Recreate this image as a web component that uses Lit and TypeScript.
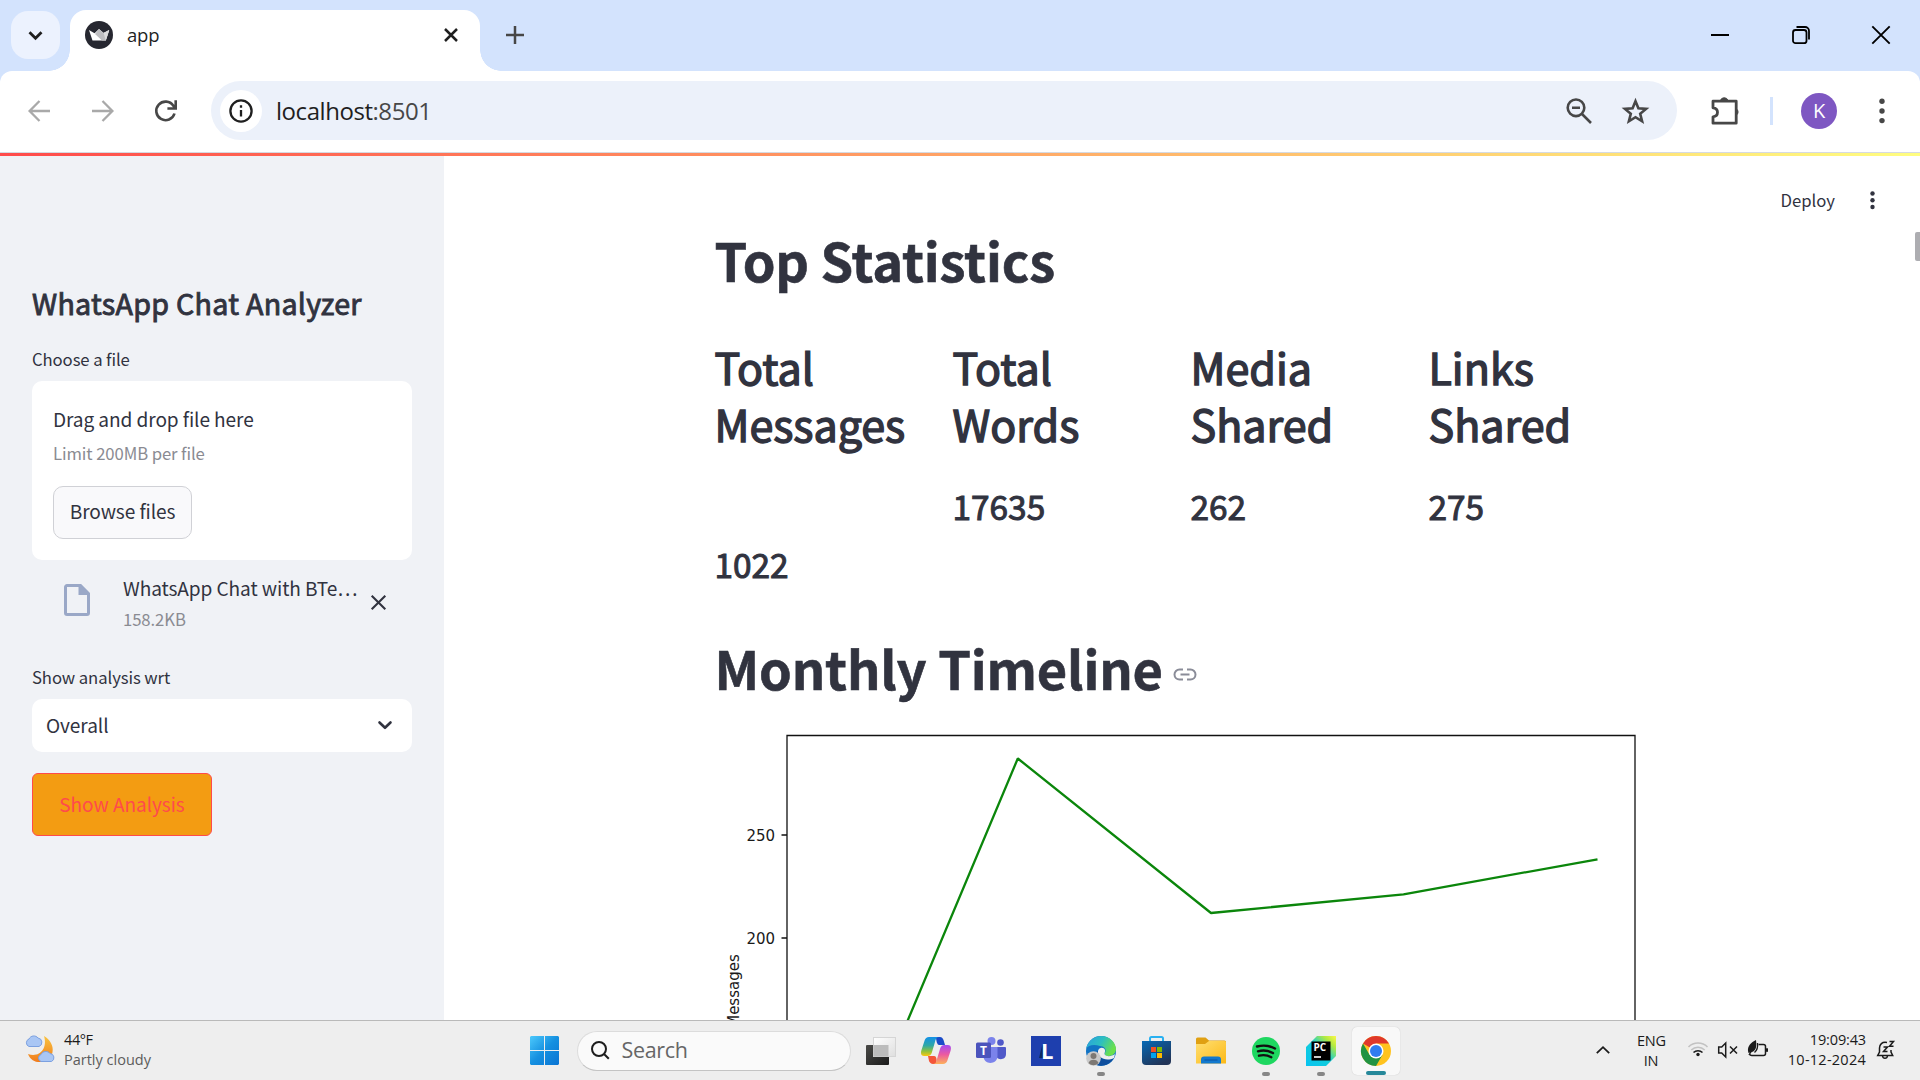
import { LitElement, html, css } from "lit";
import { customElement } from "lit/decorators.js";

const stats = [
  { a: "Total", b: "Messages", value: "1022", late: true },
  { a: "Total", b: "Words", value: "17635", late: false },
  { a: "Media", b: "Shared", value: "262", late: false },
  { a: "Links", b: "Shared", value: "275", late: false },
];

@customElement("browser-chrome")
class BrowserChrome extends LitElement {
  static styles = css`
    :host { display: block; height: 153px; background: #d3e3fd; font-family: "Open Sans", "Noto Sans", sans-serif; color: #1f1f1f; }
    svg { display: block; flex: none; overflow: visible; }
    .tabs { height: 71px; display: flex; align-items: flex-start; box-sizing: border-box; padding: 10px 30px 0 11px; }
    .search { width: 49px; height: 48px; margin-top: 1px; border-radius: 17px; background: #ecf2fe; display: grid; place-items: center; }
    .tab { position: relative; margin-left: 10px; width: 410px; height: 61px; box-sizing: border-box; background: #fff; border-radius: 16px 16px 0 0; display: flex; align-items: center; padding: 0 22.5px 11px 15px; }
    .tab::before, .tab::after { content: ""; position: absolute; bottom: 0; width: 21px; height: 21px; }
    .tab::before { left: -21px; background: radial-gradient(circle at 0 0, transparent 20.5px, #fff 21px); }
    .tab::after { right: -21px; background: radial-gradient(circle at 100% 0, transparent 20.5px, #fff 21px); }
    .name { flex: 1; margin-left: 14px; font-size: 18.5px; line-height: 28px; letter-spacing: -0.2px; }
    .plus { margin: 16px 0 0 25.5px; }
    .grow { flex: 1; }
    .win { display: flex; gap: 62.5px; margin-top: 16px; }
    .bar { height: 82px; box-sizing: border-box; border-bottom: 1px solid #d5dae2; background: #fff; border-radius: 12px 12px 0 0; display: flex; align-items: center; padding: 0 26px 2px 28px; }
    .nav { display: flex; gap: 41.5px; }
    .omni { width: 1466px; height: 59px; margin: 0 34px 0 34px; box-sizing: border-box; border-radius: 30px; background: #ecf1fa; display: flex; align-items: center; padding: 0 28px 0 9px; }
    .info { width: 42px; height: 42px; border-radius: 50%; background: #fff; display: grid; place-items: center; }
    .url { flex: 1; margin-left: 14px; font-size: 24px; line-height: 34px; letter-spacing: -0.45px; }
    .url span { color: #474747; }
    .star { margin-left: 30px; }
    .div { width: 3px; height: 28px; background: #d3e3fd; margin: 0 28px 0 30px; }
    .avatar { width: 36px; height: 36px; border-radius: 50%; background: #7e57c2; color: #fff; font-size: 20px; line-height: 36px; text-align: center; margin-right: 42px; }
  `;
  render() {
    return html`
      <div class="tabs">
        <div class="search"><svg width="15" height="9" viewBox="0 0 15 9"><path d="M1.5 1.3 7.5 7.2 13.5 1.3" fill="none" stroke="#1f1f1f" stroke-width="2.8"/></svg></div>
        <div class="tab">
          <svg width="28" height="28" viewBox="0 0 28 28"><circle cx="14" cy="14" r="14" fill="#262730"/><path d="M4 9l5.5 3.2L14 8l4.6 4.1L24.2 9l-3.4 10.5H7.5z" fill="#fff"/><path d="M14 8l4.6 4.1L24.2 9l-3.4 10.5H17L10 13z" fill="#bdbdc0"/><path d="M18.6 12.1L24.2 9l-3.4 10.5z" fill="#dcdcdd"/></svg>
          <div class="name">app</div>
          <svg width="14" height="14" viewBox="0 0 14 14"><path d="M1 1l12 12M13 1L1 13" stroke="#1f1f1f" stroke-width="2.5"/></svg>
        </div>
        <svg class="plus" width="18" height="18" viewBox="0 0 18 18"><path d="M9 0v18M0 9h18" stroke="#474747" stroke-width="2.5"/></svg>
        <div class="grow"></div>
        <div class="win">
          <svg width="18" height="18"><path d="M0 9h18" stroke="#000" stroke-width="2"/></svg>
          <svg width="18" height="18" fill="none" stroke="#000" stroke-width="1.8"><rect x="1" y="4" width="13.5" height="13.2" rx="2.5"/><path d="M4.5 1h8.500a4 4 0 0 1 4 4v8.500"/></svg>
          <svg width="18" height="18"><path d="M.3.3l17.400 17.400M17.700.3L.3 17.700" stroke="#000" stroke-width="1.900"/></svg>
        </div>
      </div>
      <div class="bar">
        <div class="nav">
          <svg width="22" height="22" fill="none" stroke="#a9a9a9" stroke-width="2.300"><path d="M22 11H2M11.500 1 1.600 11l9.900 10"/></svg>
          <svg width="22" height="22" fill="none" stroke="#a9a9a9" stroke-width="2.300"><path d="M0 11h20M10.500 1l9.900 10-9.900 10"/></svg>
          <svg width="22" height="22" fill="none" stroke="#474747" stroke-width="2.600"><path d="M19.500 13.500A9.300 9.300 0 1 1 18.300 5.700L20.500 8M20.700 .2v8.300h-8.300"/></svg>
        </div>
        <div class="omni">
          <div class="info"><svg width="24" height="24" fill="none" stroke="#1f1f1f" stroke-width="2.300"><circle cx="12" cy="12" r="10.600"/><path d="M12 11v6.500M12 6.300v2.500"/></svg></div>
          <div class="url">localhost<span>:8501</span></div>
          <svg width="26" height="26" fill="none" stroke="#474747" stroke-width="2.600"><circle cx="10" cy="9.800" r="8.300"/><path d="M16 16l9 9M6 9.800h8"/></svg>
          <svg class="star" width="27" height="26" viewBox="0 0 27 26"><path d="M13.500 3.200l2.900 7.100 7.700.6-5.900 4.900 1.900 7.500-6.600-4.100-6.600 4.100 1.900-7.500-5.900-4.900 7.700-.6z" fill="none" stroke="#474747" stroke-width="2.600"/></svg>
        </div>
        <svg width="29" height="29" viewBox="0 0 29 29"><path d="M2 5.200h23.200v22H2v-6.400c6-.6 6-8.400 0-9z" fill="none" stroke="#474747" stroke-width="2.800" stroke-linejoin="round"/><path d="M9.400 4.500a4 4 0 0 1 7.600 0zM25 12.500a4 4 0 0 1 0 7z" fill="#474747" stroke="#474747"/></svg>
        <div class="div"></div>
        <div class="avatar">K</div>
        <svg width="6" height="26" fill="#474747"><circle cx="3" cy="3.300" r="2.700"/><circle cx="3" cy="13" r="2.700"/><circle cx="3" cy="22.600" r="2.700"/></svg>
      </div>`;
  }
}

@customElement("side-panel")
class SidePanel extends LitElement {
  static styles = css`
    :host { display: block; width: 444px; flex: none; box-sizing: border-box; background: #f0f2f6; padding: 127px 32px 0; color: #31333f; font: 19.1px/32px "Noto Sans CJK SC", sans-serif; letter-spacing: -0.09px; }
    svg { display: block; flex: none; overflow: visible; }
    h2 { margin: 0; font-size: 28.65px; line-height: 40px; font-weight: 400; letter-spacing: 0.28px; -webkit-text-stroke: 0.9px #31333f; white-space: nowrap; }
    .label { font-size: 16.7px; line-height: 28px; }
    .l1 { margin-top: 22px; }
    .drop { margin-top: 8px; height: 179px; box-sizing: border-box; padding: 22px 21px; border-radius: 10px; background: #fff; }
    .small { font-size: 16.7px; line-height: 28px; color: #8a8b92; }
    .drop .small { margin-top: 4px; }
    .browse { margin-top: 19px; width: 139px; height: 53px; box-sizing: border-box; border: 1px solid #d0d1d6; border-radius: 10px; background: #f9f9fb; line-height: 49px; text-align: center; }
    .file { display: flex; align-items: flex-start; margin-top: 12px; padding: 0 26px 0 32px; height: 76px; }
    .file .doc { margin-top: 12px; }
    .meta { margin-left: 33px; width: 236px; white-space: nowrap; }
    .meta .small { margin-top: 1px; }
    .file .x { margin: 23px 0 0 12px; }
    .l2 { margin-top: 15px; }
    .select { margin-top: 8px; height: 53px; box-sizing: border-box; border-radius: 10px; background: #fff; padding: 0 20px 2px 14px; display: flex; align-items: center; justify-content: space-between; }
    .select svg { margin-top: 2px; }
    .go { margin-top: 21px; width: 180px; height: 63px; box-sizing: border-box; border: 1px solid #ff4b4b; border-radius: 6px; background: #f39c12; color: #ff4b4b; line-height: 60px; text-align: center; }
  `;
  render() {
    return html`
      <h2>WhatsApp Chat Analyzer</h2>
      <div class="label l1">Choose a file</div>
      <div class="drop">
        <div>Drag and drop file here</div>
        <div class="small">Limit 200MB per file</div>
        <div class="browse">Browse files</div>
      </div>
      <div class="file">
        <svg class="doc" width="26" height="32" viewBox="0 0 26 32"><path d="M3 1.500h13.500L24.500 9.500v19.500a1.500 1.500 0 0 1-1.500 1.500H3a1.500 1.500 0 0 1-1.500-1.500V3A1.500 1.500 0 0 1 3 1.500z" fill="none" stroke="#9aa8c7" stroke-width="3"/><path d="M14.500 1h2.500l8 8v2h-10.500z" fill="#9aa8c7"/></svg>
        <div class="meta"><div>WhatsApp Chat with BTe…</div><div class="small">158.2KB</div></div>
        <svg class="x" width="15" height="15"><path d="M.7.7l13.600 13.600M14.300.7L.7 14.300" stroke="#31333f" stroke-width="2.100"/></svg>
      </div>
      <div class="label l2">Show analysis wrt</div>
      <div class="select"><span>Overall</span><svg width="14" height="9"><path d="M1.500 1.500l5.500 5.300 5.500-5.300" fill="none" stroke="#31333f" stroke-width="2.600" stroke-linecap="round" stroke-linejoin="round"/></svg></div>
      <div class="go">Show Analysis</div>`;
  }
}

@customElement("stats-page")
class StatsPage extends LitElement {
  static styles = css`
    :host { display: flex; flex: 1; flex-direction: column; box-sizing: border-box; background: #fff; color: #31333f; font-family: "Noto Sans CJK SC", sans-serif; overflow: hidden; position: relative; }
    svg { display: block; flex: none; overflow: visible; }
    .head { height: 68px; flex: none; display: flex; align-items: flex-start; justify-content: flex-end; padding: 30px 45px 0 0; box-sizing: border-box; gap: 35px; font-size: 16.7px; line-height: 28px; }
    .head svg { margin-top: 5px; }
    .thumb { position: absolute; right: 0; top: 76px; width: 5px; height: 29px; background: #adadb1; border-radius: 2px 0 0 2px; }
    .body { padding-left: 270.5px; }
    h1 { margin: 0; font-size: 52.4px; line-height: 70px; font-weight: 700; letter-spacing: -0.18px; -webkit-text-stroke: 0.6px #31333f; white-space: nowrap; display: flex; align-items: center; }
    .grid { display: grid; grid-template-columns: repeat(4, 238px); height: 294.5px; margin-top: 43.5px; }
    h2 { margin: 0; font-size: 43px; line-height: 57.200px; font-weight: 400; -webkit-text-stroke: 1.400px #31333f; white-space: nowrap; }
    h3 { margin: 31px 0 0; font-size: 33.400px; line-height: 45px; font-weight: 400; -webkit-text-stroke: 1px #31333f; }
    h3.late { margin-top: 89px; }
    .link { margin: 15px 0 0 10px; }
    .plot { margin-top: 14px; }
    .plot text { font-family: "DejaVu Sans", sans-serif; font-size: 15px; fill: #1a1a1a; }
  `;
  render() {
    return html`
      <div class="head"><span>Deploy</span><svg width="5" height="18" fill="#31333f"><circle cx="2.500" cy="2.500" r="2.200"/><circle cx="2.500" cy="9.200" r="2.200"/><circle cx="2.500" cy="16" r="2.200"/></svg></div>
      <div class="thumb"></div>
      <div class="body">
        <h1>Top Statistics</h1>
        <div class="grid">
          ${stats.map((s) => html`<div><h2>${s.a}<br>${s.b}</h2><h3 class=${s.late ? "late" : ""}>${s.value}</h3></div>`)}
        </div>
        <h1>Monthly Timeline<svg class="link" width="24" height="13" fill="none" stroke="#8a8c98" stroke-width="2"><path d="M10 1.500H6.500a5 5 0 0 0 0 10H10M14 1.500h3.500a5 5 0 0 1 0 10H14M7.500 6.500h9"/></svg></h1>
        <svg class="plot" width="940" height="304" viewBox="714.5 716 940 304">
          <path d="M786.500 1040V735.500H1634.500V1040M781 835h5.500M781 938h5.500" fill="none" stroke="#111" stroke-width="1.300"/>
          <path d="M899 1040L1017.300 758.500 1210.500 913 1403 894.300 1597 859.300" fill="none" stroke="#0b860b" stroke-width="2.300" stroke-linejoin="bevel"/>
          <text x="746" y="840.700">250</text><text x="746" y="943.700">200</text>
          <text transform="translate(738.7 1027.8) rotate(-90)">Messages</text>
        </svg>
      </div>`;
  }
}

@customElement("task-bar")
class TaskBar extends LitElement {
  static styles = css`
    :host { display: grid; grid-template-columns: 530px 870px 1fr; height: 60px; box-sizing: border-box; border-top: 1px solid #b9b9b9; background: #eee; font: 14.500px/20px "Open Sans", "Noto Sans", sans-serif; color: #1b1b1b; position: relative; }
    svg { display: block; flex: none; overflow: visible; }
    .weather { display: flex; padding: 9px 0 0 25px; }
    .weather svg { margin-top: 4px; }
    .weather div { margin-left: 9px; letter-spacing: -0.400px; }
    .mute { color: #5c5c5c; letter-spacing: 0; }
    .apps { display: flex; align-items: center; }
    .field { width: 274px; height: 40px; box-sizing: border-box; margin: 0 15.500px 0 17.500px; border: 1px solid #dcdcdc; border-bottom-color: #c4c4c4; border-radius: 20px; background: #fafafa; display: flex; align-items: center; padding: 0 0 1px 13.500px; font-size: 21.500px; line-height: 30px; color: #666; }
    .field span { margin-left: 12.500px; letter-spacing: -0.350px; }
    .app { position: relative; width: 30px; height: 58px; margin-right: 25px; display: grid; place-items: center; }
    .run::after { content: ""; position: absolute; bottom: 4px; left: 11px; width: 8px; height: 4px; border-radius: 2px; background: #868686; }
    .active { width: 48px; height: 48px; margin: 0 0 0 -9px; border-radius: 5px; background: #f8f8f8; box-shadow: 0 0 1px #bbb; }
    .active::after { bottom: 0; left: 14px; width: 20px; background: #26889a; }
    .tray { display: flex; align-items: flex-start; justify-content: flex-end; padding-right: 26px; }
    .lang { text-align: center; margin: 10px 23px 0 27px; width: 28px; letter-spacing: -0.200px; }
    .up { margin-top: 25px; }
    .time { display: grid; justify-items: end; margin: 9px 11px 0 10px; width: 87px; white-space: nowrap; letter-spacing: -0.150px; }
    .date { letter-spacing: 0.250px; }
  `;
  render() {
    return html`
      <div class="weather">
        <svg width="30" height="29" viewBox="0 0 30 29">
          <defs><linearGradient id="m" x1="0" y1="0" x2="0" y2="1"><stop offset="0" stop-color="#f9c440"/><stop offset="1" stop-color="#f07b1d"/></linearGradient></defs>
          <path d="M19 2c11 6 12 21 1 25-6 2.500-14 1-17-7 11 4 20-5 16-18z" fill="url(#m)"/>
          <path d="M4 12.500a4 4 0 0 1 0-7.500 5.300 5.300 0 0 1 9-1 4.400 4.400 0 0 1 1 8.500z" fill="#a9c6f4" stroke="#7ba0e0"/>
          <path d="M16 27.500a3.700 3.700 0 0 1 0-7 5.300 5.300 0 0 1 9-1 4.200 4.200 0 0 1 1.500 8z" fill="#a9c6f4" stroke="#7ba0e0"/></svg>
        <div>44°F<br><span class="mute">Partly cloudy</span></div>
      </div>
      <div class="apps">
        <svg width="29" height="29"><defs><linearGradient id="w" gradientUnits="userSpaceOnUse" x1="0" y1="0" x2="29" y2="29"><stop offset="0" stop-color="#4cc9fc"/><stop offset=".5" stop-color="#1590e0"/><stop offset="1" stop-color="#0a74d3"/></linearGradient></defs><path d="M1 0h13v14H0V1zM15 0h13l1 1v13H15zM0 15h14v14H1l-1-1zM15 15h14v13l-1 1H15z" fill="url(#w)"/></svg>
        <div class="field"><svg width="18" height="18" fill="none" stroke="#1d1d1d" stroke-width="2"><circle cx="8" cy="8" r="7"/><path d="M13 13l4.800 4.800"/></svg><span>Search</span></div>
        <div class="app"><svg width="30" height="28"><defs><linearGradient id="k" x1="0" y1="0" x2="1" y2="1"><stop offset="0" stop-color="#4a4a47"/><stop offset="1" stop-color="#1b1b1b"/></linearGradient><linearGradient id="k2" x1="0" y1="0" x2="1" y2="1"><stop offset="0" stop-color="#fff"/><stop offset="1" stop-color="#dedede"/></linearGradient></defs><rect y="8" width="23" height="20" rx="1" fill="url(#k)"/><rect x="7.500" y=".5" width="22" height="19" fill="url(#k2)" stroke="#d5d5d5"/><rect x="7.500" y="8" width="15" height="11.500" fill="#bcbcbc"/></svg></div>
        <div class="app"><svg width="30" height="27" viewBox="0 0 30 27"><defs><linearGradient id="c1" x1="0" y1="0" x2="0" y2="1"><stop offset="0" stop-color="#1391e8"/><stop offset=".45" stop-color="#2fa8a5"/><stop offset=".75" stop-color="#8fc23c"/><stop offset="1" stop-color="#fbc70f"/></linearGradient><linearGradient id="c2" x1="0" y1="0" x2="0" y2="1"><stop offset="0" stop-color="#a44af3"/><stop offset=".5" stop-color="#ec5aa0"/><stop offset="1" stop-color="#fdb15a"/></linearGradient></defs>
          <path d="M15 0h4c2 0 3 1.500 3.500 3l1.500 5h-6c-2 0-3-5-3-8z" fill="#1a4bc8"/><path d="M15 27h-3c-2 0-3.500-1.500-4-3l-1-5h6c3 0 3 5 2 8z" fill="#f4553a"/>
          <path d="M8 0h10c-3 0-3.500 3-4.300 6l-3 10c-.8 2-2 3-4 3H3c-3 0-3.500-3-2.500-6L3.600 3.500C4.300 1.300 5.700 0 8 0z" fill="url(#c1)"/><path d="M22 27H12c3 0 3.500-3 4.300-6l3-10c.8-2 2-3 4-3H27c3 0 3.500 3 2.500 6l-3.100 9.500c-.7 2.200-2.100 3.500-4.400 3.500z" fill="url(#c2)"/></svg></div>
        <div class="app"><svg width="30" height="27" viewBox="0 0 30 27"><circle cx="15.500" cy="4" r="4" fill="#7b83eb"/><circle cx="24.500" cy="5.500" r="3.300" fill="#5059c9"/><path d="M20 10h9a1 1 0 0 1 1 1v6c0 6-8 7-10 2z" fill="#5059c9"/><path d="M9 10h12.500v9c0 9-14 9.500-14 0z" fill="#7b83eb"/><rect y="5.500" width="15" height="15.500" rx="1.500" fill="#4b53bc"/><text x="7.500" y="17.500" text-anchor="middle" font-size="12" font-weight="700" fill="#fff">T</text></svg></div>
        <div class="app"><svg width="30" height="30"><rect width="30" height="30" fill="#1e3fae"/><path d="M8 22l3.500-14 2 14z" fill="#0c2b62"/><text x="10" y="22.500" font-size="22" font-weight="700" fill="#fff">L</text></svg></div>
        <div class="app run"><svg width="30" height="30" viewBox="0 0 30 30"><defs><linearGradient id="e1" x1="0" y1="0" x2="1" y2=".4"><stop offset="0" stop-color="#2a9fe0"/><stop offset=".55" stop-color="#2dbfc0"/><stop offset="1" stop-color="#6ae04c"/></linearGradient></defs><circle cx="15" cy="15" r="15" fill="#1273c4"/><path d="M0 13C2 4 9 0 15 0c9 0 15 7 15 13 0 4-3 7-7 7-4 0-5-1.500-4-3 2-4-1-7-5-7C8 8 2 9 0 13z" fill="url(#e1)"/><path d="M12 15c0 7 6 10.500 16 7-4 7-12 9-17 7-4-4-4-11 1-14z" fill="#0f4f9e"/><path d="M12 15c1-4 6-4 7-1 .5 2-1 3-.3 4.500 2 2.500 7 2 10.300-.5l-1 4c-8 4-17-.5-16-7z" fill="#eee"/><circle cx="7.500" cy="22.500" r="7.300" fill="#c9c9c9"/><circle cx="7.500" cy="20" r="3" fill="#7d7873"/><path d="M2.500 27c1-4.500 9-4.500 10 0-3 3-7 3-10 0z" fill="#7d7873"/></svg></div>
        <div class="app"><svg width="29" height="29" viewBox="0 0 29 29"><defs><linearGradient id="s" x1="0" y1="0" x2=".6" y2="1"><stop offset="0" stop-color="#0669b5"/><stop offset="1" stop-color="#213457"/></linearGradient></defs><path d="M8 6V2.500A1.500 1.500 0 0 1 9.500 1h10A1.500 1.500 0 0 1 21 2.500V6" fill="none" stroke="#29b1f1" stroke-width="2"/><path d="M0 5h29v20a4 4 0 0 1-4 4H4a4 4 0 0 1-4-4z" fill="url(#s)"/><path d="M9 11h5v5H9z" fill="#f25022"/><path d="M15 11h5v5h-5z" fill="#7fba00"/><path d="M9 17h5v5H9z" fill="#00a4ef"/><path d="M15 17h5v5h-5z" fill="#ffb900"/></svg></div>
        <div class="app"><svg width="30" height="27" viewBox="0 0 30 27"><defs><linearGradient id="f" x1="0" y1="0" x2="1" y2="1"><stop offset="0" stop-color="#ffdf72"/><stop offset="1" stop-color="#fcb916"/></linearGradient></defs><path d="M0 2a1.500 1.500 0 0 1 1.500-1.500h8L13 3.500h15.500A1.500 1.500 0 0 1 30 5v5H0z" fill="#e0a012"/><path d="M0 7h9l4-3h15.500A1.500 1.500 0 0 1 30 5.500V26.500H0z" fill="url(#f)"/><path d="M5 26.500v-4a3 3 0 0 1 3-3h14a3 3 0 0 1 3 3v4z" fill="#1279ce"/><path d="M8.500 23h13" stroke="#0a52a0"/></svg></div>
        <div class="app run"><svg width="28" height="28" viewBox="0 0 28 28"><circle cx="14" cy="14" r="14" fill="#1ed760"/><path d="M5 9.500c6-1.500 12.500-1 18 2M6 14.300c5-1.300 10.500-.8 15 1.800M7 18.700c4-1 8.500-.6 12.300 1.500" fill="none" stroke="#111" stroke-width="2.400" stroke-linecap="round"/></svg></div>
        <div class="app run"><svg width="30" height="30" viewBox="0 0 30 30"><defs><linearGradient id="p" x1="0" y1="1" x2="1" y2="0"><stop offset="0" stop-color="#07c3f2"/><stop offset=".5" stop-color="#12cdd8"/><stop offset=".8" stop-color="#b5ea40"/><stop offset="1" stop-color="#fcf84a"/></linearGradient></defs><path d="M0 11L11 0h19v20L20 30H0z" fill="url(#p)"/><rect x="5.500" y="5.500" width="19" height="19" fill="#000"/><text x="7.500" y="14.800" font-size="10" font-weight="700" fill="#fff">PC</text><path d="M8 21h7" stroke="#fff" stroke-width="1.600"/></svg></div>
        <div class="app run active"><svg width="30" height="30" viewBox="0 0 30 30"><circle cx="15" cy="15" r="15" fill="#ffc31f"/><path d="M15 15L2 7.500A15 15 0 0 1 28 7.500H15z" fill="#e0382b"/><path d="M2 7.500A15 15 0 0 0 15 30L21.500 18.750 15 15 8.500 18.750z" fill="#229342"/><circle cx="15" cy="15" r="7.500" fill="#fff"/><circle cx="15" cy="15" r="6" fill="#2f7cf0"/></svg></div>
      </div>
      <div class="tray">
        <svg class="up" width="14" height="8"><path d="M.8 7.200L7 1.200l6.200 6" fill="none" stroke="#1b1b1b" stroke-width="1.800"/></svg>
        <div class="lang">ENG<br>IN</div>
        <svg width="81" height="59" viewBox="1688 1021 81 59" fill="none" stroke="#1b1b1b" stroke-width="1.500">
          <path d="M1688.500 1047a13.500 13.500 0 0 1 19 0M1691.300 1050a9.500 9.500 0 0 1 13.400 0" stroke="#c2c2c2"/><path d="M1693.500 1052.500a6.500 6.500 0 0 1 9 0"/><circle cx="1698" cy="1054.500" r="1.700" fill="#1b1b1b" stroke="none"/>
          <path d="M1718.700 1047h3l4-4v14l-4-4h-3zM1730 1046.500l7 7M1737 1046.500l-7 7"/>
          <path d="M1758.500 1044.500h5a2 2 0 0 1 2 2v7a2 2 0 0 1-2 2h-11.500a2.500 2.500 0 0 1-2.500-1.500" /><path d="M1765.500 1048.300h2.500v3.500h-2.500z" fill="#1b1b1b" stroke="none"/><path d="M1748 1051c-.5-5 3-8.500 8-11 .5 5.500 1 10-4 12l-3.500 1z" fill="#1b1b1b" stroke="none"/><path d="M1749 1055l3-5M1757.500 1043c.5 4 0 7-3 9.500" stroke-width="1.300"/>
        </svg>
        <div class="time"><span>19:09:43</span><span class="date">10-12-2024</span></div>
        <svg width="17" height="59" viewBox="1877 1021 17 59" fill="none" stroke="#1b1b1b" stroke-width="1.500"><path d="M1887 1042.500c-5-1-7.500 2-7.500 5.500v4l-1.800 3.500h15l-1.700-3.500v-2M1882.500 1056c.5 3 4.500 3 5 0"/><path d="M1883.500 1047h4l-4 4.500h4M1889.500 1041.500h4l-4 4.800h4"/></svg>
      </div>`;
  }
}

@customElement("app-root")
class AppRoot extends LitElement {
  static styles = css`
    :host { display: flex; flex-direction: column; width: 1920px; height: 1080px; overflow: hidden; background: #fff; }
    .stripe { height: 3px; flex: none; background: linear-gradient(90deg, #ff4b4b, #fffd80); }
    .page { height: 864px; flex: none; display: flex; overflow: hidden; }
  `;
  render() {
    return html`<browser-chrome></browser-chrome><div class="stripe"></div>
      <div class="page"><side-panel></side-panel><stats-page></stats-page></div><task-bar></task-bar>`;
  }
}
